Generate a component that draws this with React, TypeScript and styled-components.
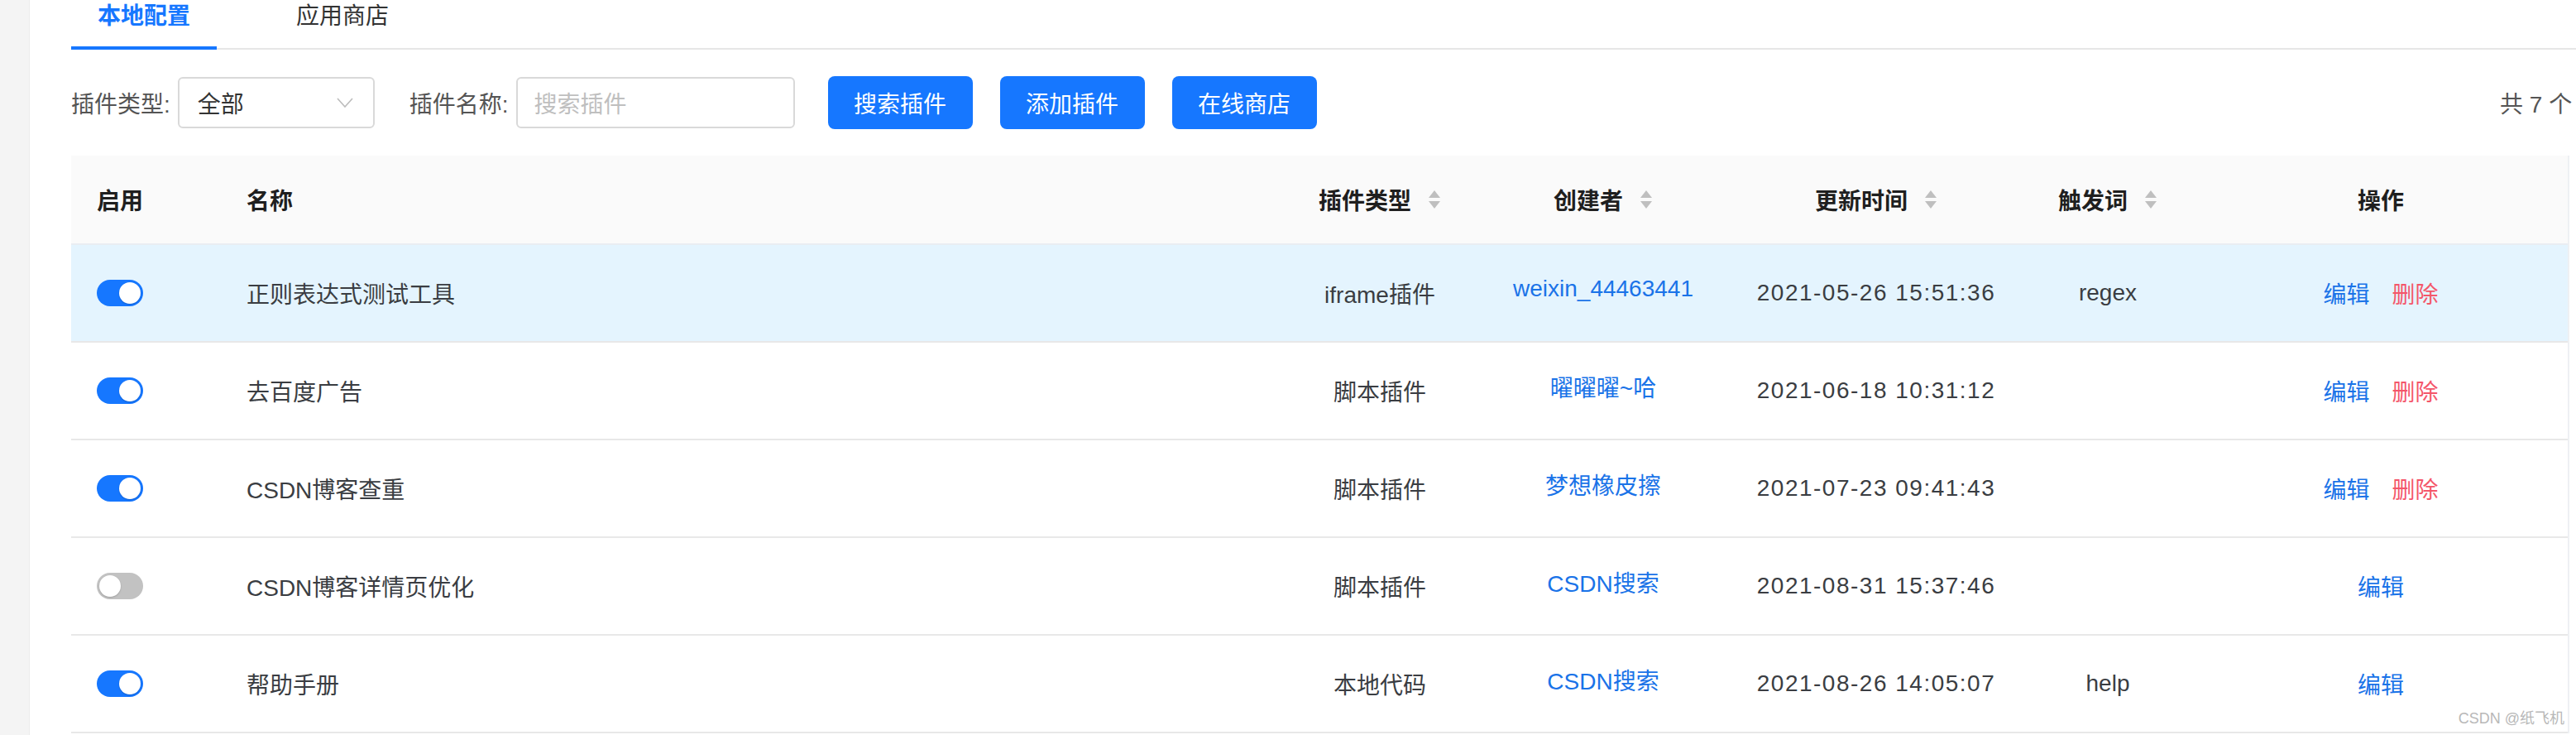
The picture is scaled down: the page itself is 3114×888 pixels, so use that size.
import React from "react";
import styled, { createGlobalStyle } from "styled-components";

const GlobalStyle = createGlobalStyle`
  html, body {
    margin: 0;
    padding: 0;
    background: #ffffff;
    overflow: hidden;
  }
  body {
    font-family: "Liberation Sans", "Noto Sans CJK SC", sans-serif;
    -webkit-font-smoothing: antialiased;
  }
  * { box-sizing: border-box; }
`;

const Page = styled.div`
  position: relative;
  display: flex;
  width: 3114px;
  height: 888px;
  overflow: hidden;
`;

const SideStrip = styled.div`
  width: 36px;
  flex: 0 0 36px;
  background: #f4f4f4;
  border-right: 1px solid #ececec;
`;

const Main = styled.div`
  flex: 1;
  min-width: 0;
  padding-left: 50px;
  display: flex;
  flex-direction: column;
`;

const TabBar = styled.div`
  display: flex;
  align-items: flex-end;
  gap: 64px;
  height: 60px;
  border-bottom: 2px solid #e6e6e6;
`;

const Tab = styled.div<{ $active?: boolean }>`
  height: 60px;
  margin-bottom: -2px;
  padding: 0 32px 16px;
  line-height: 40px;
  font-size: 28px;
  font-weight: ${(p) => (p.$active ? 600 : 400)};
  color: ${(p) => (p.$active ? "#1677ff" : "#333333")};
  border-bottom: 4px solid ${(p) => (p.$active ? "#1677ff" : "transparent")};
  white-space: nowrap;
`;

const Toolbar = styled.div`
  display: flex;
  align-items: center;
  height: 64px;
  margin-top: 32px;
`;

const Label = styled.span`
  font-size: 28px;
  color: #555555;
  white-space: nowrap;
  margin-right: 9px;
`;

const SelectBox = styled.div`
  width: 238px;
  height: 62px;
  border: 2px solid #d9d9d9;
  border-radius: 6px;
  display: flex;
  align-items: center;
  justify-content: space-between;
  padding: 0 24px 0 22px;
  font-size: 28px;
  color: #333333;
  margin-right: 42px;
`;

const InputBox = styled.div`
  width: 337px;
  height: 62px;
  border: 2px solid #d9d9d9;
  border-radius: 6px;
  display: flex;
  align-items: center;
  padding: 0 20px;
  font-size: 28px;
  color: #bfbfbf;
  margin-right: 40px;
`;

const PrimaryButton = styled.button`
  width: 175px;
  height: 64px;
  border: none;
  border-radius: 8px;
  background: #1677ff;
  color: #ffffff;
  font-family: inherit;
  font-size: 28px;
  padding: 0;
  margin-right: 33px;
  cursor: pointer;
`;

const Count = styled.div`
  margin-left: auto;
  width: 92px;
  white-space: nowrap;
  font-size: 28px;
  color: #555555;
`;

const Table = styled.div`
  width: 3020px;
  flex: 0 0 auto;
  margin-top: 32px;
  display: flex;
  flex-direction: column;
  border-right: 2px solid #eef0f3;
`;

const columns = "181px 1fr 232px 308px 352px 208px 452px";

const HeaderRow = styled.div`
  display: grid;
  grid-template-columns: ${columns};
  height: 108px;
  background: #fafafa;
  border-bottom: 2px solid #e9edf2;
`;

const Row = styled.div<{ $highlight?: boolean }>`
  display: grid;
  grid-template-columns: ${columns};
  height: 118px;
  background: ${(p) => (p.$highlight ? "#e4f4fe" : "#ffffff")};
  border-bottom: 2px solid #e8e8e8;
`;

const HeadCell = styled.div<{ $center?: boolean }>`
  display: flex;
  align-items: center;
  justify-content: ${(p) => (p.$center ? "center" : "flex-start")};
  padding-left: ${(p) => (p.$center ? "0" : "31px")};
  font-size: 28px;
  font-weight: 600;
  color: #1f1f1f;
  white-space: nowrap;
`;

const Cell = styled.div<{ $center?: boolean; $spaced?: boolean }>`
  display: flex;
  align-items: center;
  justify-content: ${(p) => (p.$center ? "center" : "flex-start")};
  padding-left: ${(p) => (p.$center ? "0" : "31px")};
  font-size: 28px;
  letter-spacing: ${(p) => (p.$spaced ? "1.5px" : "normal")};
  color: #3a3d42;
  white-space: nowrap;
`;

const SortWrap = styled.span`
  display: inline-flex;
  margin-left: 20px;
`;

const CreatorLink = styled.span`
  color: #1a73e8;
  padding-bottom: 10px;
`;

const Actions = styled.div`
  display: flex;
  gap: 27px;
`;

const ActionLink = styled.span<{ $danger?: boolean }>`
  color: ${(p) => (p.$danger ? "#f4566a" : "#1a73e8")};
  cursor: pointer;
`;

const SwitchTrack = styled.div<{ $on: boolean }>`
  width: 56px;
  height: 32px;
  border-radius: 16px;
  padding: 3px;
  display: flex;
  justify-content: ${(p) => (p.$on ? "flex-end" : "flex-start")};
  background: ${(p) => (p.$on ? "#1677ff" : "#c2c2c2")};
`;

const SwitchKnob = styled.div`
  width: 26px;
  height: 26px;
  border-radius: 50%;
  background: #ffffff;
  box-shadow: 0 1px 2px rgba(0, 0, 0, 0.18);
`;

const Watermark = styled.div`
  position: absolute;
  right: 14px;
  bottom: 9px;
  font-size: 18px;
  color: #b8b8b8;
  white-space: nowrap;
`;

const SortIcon = () => (
  <svg width="16" height="24" viewBox="0 0 16 24">
    <polygon points="8,1 15,10 1,10" fill="#bfbfbf" />
    <polygon points="1,14 15,14 8,23" fill="#bfbfbf" />
  </svg>
);

const Chevron = () => (
  <svg width="20" height="12" viewBox="0 0 20 12">
    <polyline points="1,1 10,11 19,1" fill="none" stroke="#bcbcbc" strokeWidth="1.6" />
  </svg>
);

const Switch = ({ on }: { on: boolean }) => (
  <SwitchTrack $on={on}>
    <SwitchKnob />
  </SwitchTrack>
);

type Plugin = {
  on: boolean;
  name: string;
  type: string;
  creator: string;
  time: string;
  trigger: string;
  deletable: boolean;
};

const plugins: Plugin[] = [
  { on: true, name: "正则表达式测试工具", type: "iframe插件", creator: "weixin_44463441", time: "2021-05-26 15:51:36", trigger: "regex", deletable: true },
  { on: true, name: "去百度广告", type: "脚本插件", creator: "曜曜曜~哈", time: "2021-06-18 10:31:12", trigger: "", deletable: true },
  { on: true, name: "CSDN博客查重", type: "脚本插件", creator: "梦想橡皮擦", time: "2021-07-23 09:41:43", trigger: "", deletable: true },
  { on: false, name: "CSDN博客详情页优化", type: "脚本插件", creator: "CSDN搜索", time: "2021-08-31 15:37:46", trigger: "", deletable: false },
  { on: true, name: "帮助手册", type: "本地代码", creator: "CSDN搜索", time: "2021-08-26 14:05:07", trigger: "help", deletable: false },
];

export default function App() {
  return (
    <>
      <GlobalStyle />
      <Page>
        <SideStrip />
        <Main>
          <TabBar>
            <Tab $active>本地配置</Tab>
            <Tab>应用商店</Tab>
          </TabBar>

          <Toolbar>
            <Label>插件类型:</Label>
            <SelectBox>
              <span>全部</span>
              <Chevron />
            </SelectBox>
            <Label>插件名称:</Label>
            <InputBox>搜索插件</InputBox>
            <PrimaryButton>搜索插件</PrimaryButton>
            <PrimaryButton>添加插件</PrimaryButton>
            <PrimaryButton>在线商店</PrimaryButton>
            <Count>共 7 个</Count>
          </Toolbar>

          <Table>
            <HeaderRow>
              <HeadCell>启用</HeadCell>
              <HeadCell>名称</HeadCell>
              <HeadCell $center>
                插件类型
                <SortWrap><SortIcon /></SortWrap>
              </HeadCell>
              <HeadCell $center>
                创建者
                <SortWrap><SortIcon /></SortWrap>
              </HeadCell>
              <HeadCell $center>
                更新时间
                <SortWrap><SortIcon /></SortWrap>
              </HeadCell>
              <HeadCell $center>
                触发词
                <SortWrap><SortIcon /></SortWrap>
              </HeadCell>
              <HeadCell $center>操作</HeadCell>
            </HeaderRow>

            {plugins.map((p, i) => (
              <Row key={p.name} $highlight={i === 0}>
                <Cell>
                  <Switch on={p.on} />
                </Cell>
                <Cell>{p.name}</Cell>
                <Cell $center>{p.type}</Cell>
                <Cell $center>
                  <CreatorLink>{p.creator}</CreatorLink>
                </Cell>
                <Cell $center $spaced>{p.time}</Cell>
                <Cell $center>{p.trigger}</Cell>
                <Cell $center>
                  <Actions>
                    <ActionLink>编辑</ActionLink>
                    {p.deletable && <ActionLink $danger>删除</ActionLink>}
                  </Actions>
                </Cell>
              </Row>
            ))}
          </Table>
        </Main>
        <Watermark>CSDN @纸飞机</Watermark>
      </Page>
    </>
  );
}
